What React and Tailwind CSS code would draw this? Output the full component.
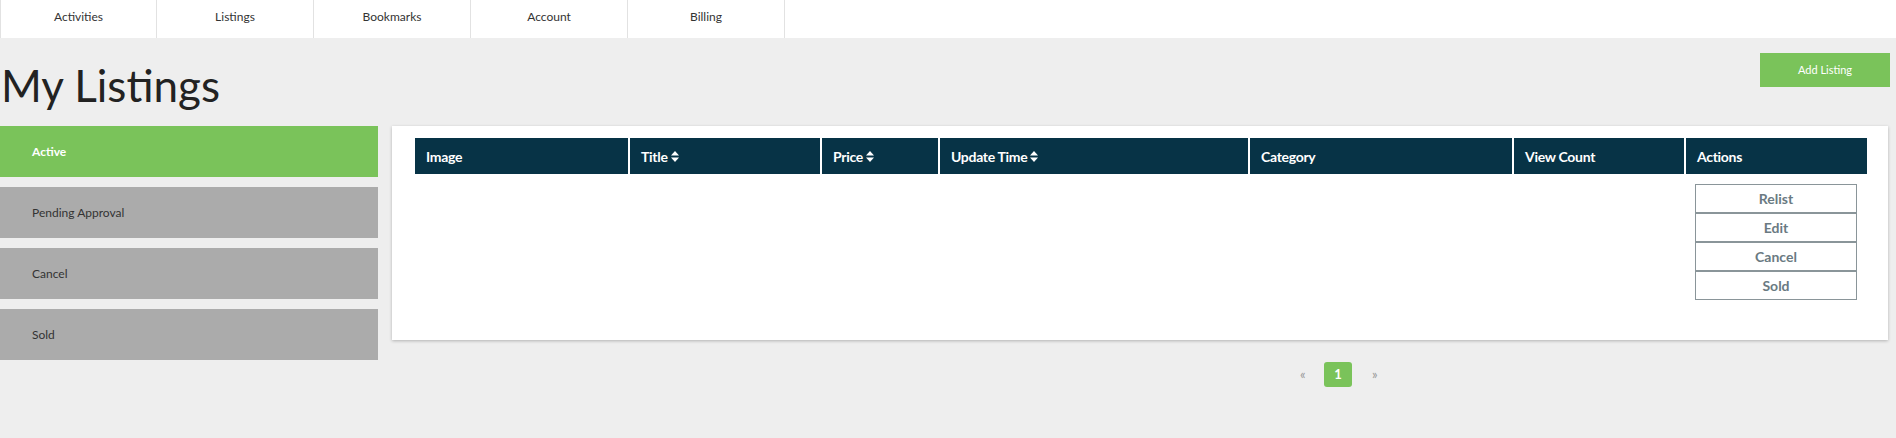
import React from "react";

const font = { fontFamily: "Lato, 'Open Sans', sans-serif" };

function SortIcon() {
  return (
    <svg width="8" height="11" viewBox="0 0 8 11" className="ml-[3px] inline-block">
      <path d="M4 0 L8 4.6 L0 4.6 Z" fill="white" />
      <path d="M0 6.4 L8 6.4 L4 11 Z" fill="white" />
    </svg>
  );
}

export default function App() {
  const nav = ["Activities", "Listings", "Bookmarks", "Account", "Billing"];
  const side = ["Active", "Pending Approval", "Cancel", "Sold"];
  const cols = [
    { label: "Image", w: "w-[213px]" },
    { label: "Title", w: "w-[192px]", sort: true },
    { label: "Price", w: "w-[118px]", sort: true },
    { label: "Update Time", w: "w-[310px]", sort: true },
    { label: "Category", w: "w-[264px]" },
    { label: "View Count", w: "w-[172px]" },
    { label: "Actions", w: "w-[183px]" },
  ];
  return (
    <div className="h-[438px] w-full overflow-hidden bg-[#eeeeee] text-[#333]" style={font}>
      <div className="flex h-[38px] bg-white">
        {nav.map((n, i) => (
          <div
            key={n}
            className={
              "flex h-full w-[157px] items-center justify-center border-r border-[#e2e2e2] pb-[4px] text-[12px] text-[#333] " +
              (i === 0 ? "border-l" : "")
            }
          >
            {n}
          </div>
        ))}
      </div>

      <div className="flex h-[88px] items-start justify-between">
        <h1 className="ml-[1px] mt-[21px] text-[44px] font-normal leading-[53px] text-[#222]">My Listings</h1>
        <button className="mr-[6px] mt-[15px] flex h-[34px] w-[130px] items-center justify-center bg-[#7ac35a] text-[11px] text-white">
          Add Listing
        </button>
      </div>

      <div className="flex items-start gap-[14px] pr-[8px]">
        <div className="flex w-[378px] flex-col gap-[10px]">
          {side.map((s, i) => (
            <div
              key={s}
              className={
                "flex h-[51px] items-center pl-[32px] text-[12px] " +
                (i === 0 ? "bg-[#7ac35a] font-bold text-white" : "bg-[#ababab] text-[#333]")
              }
            >
              {s}
            </div>
          ))}
        </div>

        <div className="flex flex-1 flex-col">
          <div className="bg-white pb-[40px] pl-[23px] pr-[21px] pt-[12px] shadow-[0_1px_3px_rgba(0,0,0,0.25)]">
            <div className="flex h-[36px] bg-[#073346]">
              {cols.map((c, i) => (
                <div
                  key={c.label}
                  className={
                    c.w +
                    " flex items-center pl-[11px] text-[14px] font-bold tracking-[-0.3px] text-white " +
                    (i > 0 ? "border-l-2 border-white" : "")
                  }
                >
                  {c.label}
                  {c.sort && <SortIcon />}
                </div>
              ))}
            </div>
            <div className="flex">
              <div className="w-[1269px]" />
              <div className="w-[183px] pl-[11px] pt-[10px]">
                {["Relist", "Edit", "Cancel", "Sold"].map((b) => (
                  <div
                    key={b}
                    className="flex h-[29px] w-[162px] items-center justify-center border border-[#8a9599] bg-white text-[14px] font-bold text-[#6a7a82]"
                  >
                    {b}
                  </div>
                ))}
              </div>
            </div>
          </div>

          <div className="ml-[908px] mt-[22px] flex items-center">
            <span className="w-[24px] text-[13px] text-[#999]">«</span>
            <span className="flex h-[25px] w-[28px] items-center justify-center rounded-[3px] bg-[#7ac35a] text-[13px] font-bold text-white">
              1
            </span>
            <span className="ml-[20px] text-[13px] text-[#999]">»</span>
          </div>
        </div>
      </div>
    </div>
  );
}
